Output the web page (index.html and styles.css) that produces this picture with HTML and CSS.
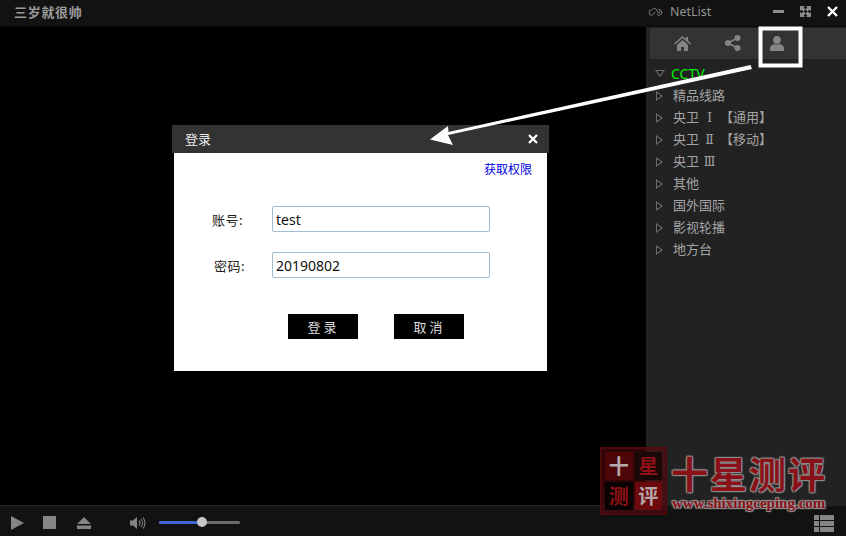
FILE: index.html
```html
<!DOCTYPE html>
<html lang="zh">
<head>
<meta charset="utf-8">
<title>NetList</title>
<link rel="stylesheet" href="styles.css">
</head>
<body>
<div class="app">
  <header class="topbar">
    <div class="app-title">三岁就很帅</div>
    <div class="top-right">
      <svg class="cloud" width="15" height="9" viewBox="0 0 16 10"><path d="M4 9.200a3 3 0 0 1-.4-6A3.600 3.600 0 0 1 8.600 2.200L11 6.500a1.300 1.300 0 1 0 1.200-2.300M7.500 5.500 5.500 8a2 2 0 0 1-1.500 1.200M11 2.800a3.200 3.200 0 0 1 1.300 6.400 2.800 2.800 0 0 1-2.700-1.200" fill="none" stroke="#777" stroke-width="1.100"/></svg>
      <span class="netlist">NetList</span>
      <div class="winbtns">
        <svg width="11" height="11" viewBox="0 0 11 11"><rect y="4" width="11" height="3" fill="#8c8c8c"/></svg>
        <svg width="11" height="11" viewBox="0 0 11 11"><path d="M0 0h5L3.700 1.300 5.500 3.500 3.500 5.500 1.300 3.700 0 5zM11 0v5L9.700 3.700 7.500 5.500 5.500 3.500 7.300 1.300 6 0zM0 11V6l1.300 1.300 2.200-1.800 2 2-1.800 2.200L5 11zM11 11H6l1.300-1.300-1.800-2.200 2-2 2.200 1.800L11 6z" fill="#8c8c8c"/></svg>
        <svg width="11" height="11" viewBox="0 0 11 11"><path d="M1 1l9 9M10 1l-9 9" stroke="#fff" stroke-width="2.400"/></svg>
      </div>
    </div>
  </header>
  <div class="middle">
    <main class="video"></main>
    <aside class="sidebar">
      <nav class="tabs">
        <div class="tab"><svg width="17" height="15" viewBox="0 0 17 15"><path d="M8.500 0 0 7.500l1 1L8.500 2 16 8.500l1-1-3-2.700V1h-2v2zM3 9l5.500-5L14 9v6h-4v-4H7v4H3z" fill="#858585"/></svg></div>
        <div class="tab"><svg width="16" height="16" viewBox="0 0 16 16"><circle cx="3" cy="8" r="3" fill="#858585"/><circle cx="12.500" cy="3" r="3" fill="#858585"/><circle cx="12.500" cy="13" r="3" fill="#858585"/><path d="M3 8l9.500-5M3 8l9.500 5" stroke="#858585" stroke-width="1.600"/></svg></div>
        <div class="tab"><svg width="14" height="15" viewBox="0 0 14 15"><ellipse cx="7" cy="4" rx="3.800" ry="4" fill="#858585"/><path d="M0 15v-2.500C0 10 2 8.500 4.500 8c1.500.8 3.500.8 5 0C12 8.500 14 10 14 12.500V15z" fill="#858585"/></svg></div>
      </nav>
      <ul class="tree">
        <li class="row active"><i class="tri down"></i><span class="cctv">CCTV</span></li>
        <li class="row"><i class="tri"></i><span>精品线路</span></li>
        <li class="row"><i class="tri"></i><span>央卫<b class="num">Ⅰ</b>【通用】</span></li>
        <li class="row"><i class="tri"></i><span>央卫<b class="num">Ⅱ</b>【移动】</span></li>
        <li class="row"><i class="tri"></i><span>央卫<b class="num">Ⅲ</b></span></li>
        <li class="row"><i class="tri"></i><span>其他</span></li>
        <li class="row"><i class="tri"></i><span>国外国际</span></li>
        <li class="row"><i class="tri"></i><span>影视轮播</span></li>
        <li class="row"><i class="tri"></i><span>地方台</span></li>
      </ul>
    </aside>
  </div>
  <footer class="controls">
    <svg class="c-play" width="13" height="14" viewBox="0 0 13 14"><path d="M0 0l13 7L0 14z" fill="#858585"/></svg>
    <span class="c-stop"></span>
    <svg class="c-eject" width="14" height="12" viewBox="0 0 14 12"><path d="M7 0l7 7H0zM0 8.500h14V12H0z" fill="#858585"/></svg>
    <svg class="c-vol" width="16" height="14" viewBox="0 0 16 14"><path d="M0 4.500h3L7 1v12L3 9.500H0z" fill="#858585"/><path d="M9 4.500a3.500 3.500 0 0 1 0 5M11 3a6 6 0 0 1 0 8M13 1.500a8.500 8.500 0 0 1 0 11" fill="none" stroke="#858585" stroke-width="1.100"/></svg>
    <div class="slider"><div class="slider-fill"></div><div class="slider-knob"></div></div>
    <svg class="c-list" width="20" height="17" viewBox="0 0 20 17"><path d="M0 0h5v5H0zM6 0h14v5H6zM0 6h5v5H0zM6 6h14v5H6zM0 12h5v5H0zM6 12h14v5H6z" fill="#858585"/></svg>
  </footer>
</div>

<section class="dialog">
  <div class="dialog-head">
    <span>登录</span>
    <svg width="10" height="10" viewBox="0 0 10 10"><path d="M1 1l8 8M9 1l-8 8" stroke="#fff" stroke-width="2.300"/></svg>
  </div>
  <div class="dialog-body">
    <a class="perm">获取权限</a>
    <div class="field"><label>账号:</label><div class="input">test</div></div>
    <div class="field field-2"><label>密码:</label><div class="input">20190802</div></div>
    <div class="actions">
      <button class="btn">登 录</button>
      <button class="btn">取 消</button>
    </div>
  </div>
</section>

<svg class="annot" width="846" height="536" viewBox="0 0 846 536">
  <rect x="760.500" y="28.500" width="40" height="37" fill="none" stroke="#fff" stroke-width="4"/>
  <path d="M750.500 65 752 69 448 135 453 145 430 139.500 448 126 448.500 132z" fill="#fff"/>
</svg>

<div class="mark">
  <div class="seal">
    <span>十</span><span class="on">星</span><span class="on">测</span><span>评</span>
  </div>
  <div class="brand">
    <div class="brand-name">十星测评</div>
    <div class="brand-url">www.shixingceping.com</div>
  </div>
</div>
</body>
</html>
```
FILE: styles.css
```css
* { box-sizing: border-box; }
html, body { margin: 0; padding: 0; }
body {
  width: 846px; height: 536px; overflow: hidden; background: #000; position: relative;
  font-family: "Noto Sans CJK SC", "Liberation Sans", sans-serif; font-size: 13px;
}
.app { display: flex; flex-direction: column; width: 846px; height: 536px; }
.topbar {
  height: 27px; flex: none; display: flex; justify-content: space-between; align-items: center;
  background: #121212; border-bottom: 1px solid #0a0a0a; padding-bottom: 3px;
}
.app-title { margin-left: 14px; color: #9b9b9b; font-size: 13px; font-weight: 700; letter-spacing: .7px; }
.top-right { display: flex; align-items: center; width: 200px; padding-left: 2px; }
.cloud { flex: none; }
.netlist { margin-left: 7px; color: #929292; font: 12.500px "Noto Sans", sans-serif; }
.winbtns { display: flex; gap: 16px; margin-left: auto; margin-right: 8px; }
.middle { flex: 1; display: flex; min-height: 0; }
.video { flex: 1; background: #000; }
.sidebar { width: 200px; background: #222; padding: 1px 0 0 4px; }
.tabs { height: 31px; background: #333; display: flex; }
.tab { width: 40px; display: flex; align-items: center; justify-content: center; padding-bottom: 1px; }
.tab:nth-child(1) { margin-left: 12px; }
.tab:nth-child(2) { margin-left: 11px; }
.tab:nth-child(3) { margin-left: 4px; }
.tree { list-style: none; margin: 2px 0 0; padding: 0 0 0 6px; }
.row { height: 22px; display: flex; align-items: center; color: #a4a4a4; font-size: 13px; white-space: pre; }
.row span { margin-left: 10px; }
.row.active { padding-top: 2px; }
.row .cctv { color: #00f000; margin-left: 6px; font: 14px "Noto Sans", sans-serif; }
.num { display: inline-block; width: 21px; text-align: center; font: 400 12px "DejaVu Serif", serif; }
.tri {
  position: relative; width: 0; height: 0; flex: none; margin-top: 3px;
  border-left: 7px solid #6e6e6e; border-top: 5px solid transparent; border-bottom: 5px solid transparent;
}
.tri::after {
  content: ""; position: absolute; left: -6px; top: -3px; width: 0; height: 0;
  border-left: 4px solid #1a1a1a; border-top: 3px solid transparent; border-bottom: 3px solid transparent;
}
.tri.down {
  margin-left: -1px; margin-top: 1px;
  border-top: 7px solid #6e6e6e; border-left: 5px solid transparent; border-right: 5px solid transparent; border-bottom: 0;
}
.tri.down::after {
  left: -3px; top: -6px;
  border-top: 4px solid #1a1a1a; border-left: 3px solid transparent; border-right: 3px solid transparent; border-bottom: 0;
}
.controls {
  height: 31px; flex: none; background: #121212; border-top: 1px solid #242424;
  display: flex; align-items: center; padding: 3px 12px 0 11px;
}
.c-stop { width: 13px; height: 13px; background: #858585; margin-left: 19px; }
.c-eject { margin-left: 21px; }
.c-vol { margin-left: 39px; }
.slider { position: relative; width: 81px; height: 3px; margin-left: 13px; background: #6c6c6c; border-radius: 2px; }
.slider-fill { width: 43px; height: 3px; background: #3e67cf; border-radius: 2px; }
.slider-knob { position: absolute; left: 38px; top: -4px; width: 10px; height: 10px; border-radius: 50%; background: #c8c8c8; }
.c-list { margin-left: auto; margin-top: 2px; }

.dialog { position: absolute; left: 172px; top: 125px; width: 377px; }
.dialog-head {
  height: 28px; background: #333; color: #eee; display: flex; align-items: center; justify-content: space-between;
  padding: 0 11px 0 13px; font-size: 13px;
}
.dialog-head span { margin-top: -2px; }
.dialog-body { position: relative; margin: 0 2px; height: 218px; background: #fff; padding-top: 53px; }
.perm { position: absolute; right: 15px; top: 7px; color: #0000e0; font-size: 12px; }
.field { display: flex; align-items: center; height: 26px; }
.field-2 { margin-top: 20px; }
.field label { width: 69px; text-align: right; color: #222; font-size: 13px; letter-spacing: .5px; }
.field-2 label { width: 71px; }
.input {
  margin-left: 29px; width: 218px; height: 26px; border: 1px solid #9fbcd0; border-radius: 2px; padding: 1px 0 0 3px;
  font: 14px/24px "Noto Sans", sans-serif; color: #111;
}
.field-2 .input { margin-left: 27px; }
.actions { display: flex; gap: 36px; margin: 36px 0 0 114px; }
.btn { width: 70px; height: 25px; background: #000; color: #ddd; border: 0; padding: 0 2px 0 0; font: 13px "Noto Sans CJK SC", sans-serif; }

.annot { position: absolute; left: 0; top: 0; pointer-events: none; }

.mark { position: absolute; left: 600px; top: 447px; display: flex; }
.seal {
  width: 67px; height: 68px; display: grid; grid-template-columns: 1fr 1fr; grid-template-rows: 1fr 1fr; gap: 2px; padding: 3px;
  border: 2px solid #4c0a0d; background: rgba(90,8,12,.55); font-size: 20px; font-weight: 700; line-height: 27px; text-align: center;
}
.seal span { color: #b5a8a8; background: #6d0a0e; }
.seal span:nth-child(1) { background: #4e0709; }
.seal .on { color: #8f1116; background: #180808; }
.seal span:nth-child(3) { background: #090202; }
.brand { margin-left: 5px; width: 156px; padding-top: 7px; }
.brand-name {
  color: #8a1118; font-size: 37px; line-height: 38px; font-weight: 700; white-space: nowrap; letter-spacing: 2px; margin-left: -1px;
  text-shadow: 1px 1px 1px #8d8d8d, -1px -1px 1px #8d8d8d, 1px -1px 1px #8d8d8d, -1px 1px 1px #8d8d8d;
}
.brand-url {
  color: #8a1118; font: 700 15px/16px "Liberation Serif", serif; white-space: nowrap; margin-top: 3px;
  text-shadow: 1px 1px 1px #999, -1px -1px 1px #999, 1px -1px 1px #999, -1px 1px 1px #999;
}
```
